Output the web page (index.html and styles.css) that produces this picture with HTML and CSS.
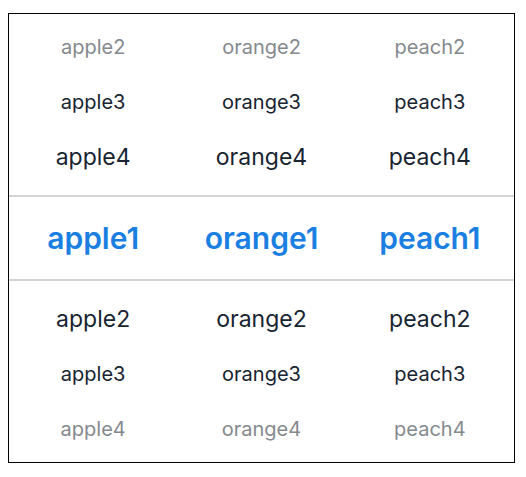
FILE: index.html
```html
<!DOCTYPE html>
<html lang="en">
<head>
	<meta charset="UTF-8">
	<title>Picker</title>
	<link rel="stylesheet" href="styles.css">
</head>
<body>
	<div class="picker">
		<div class="group top">
			<div class="row far"><span>apple2</span><span>orange2</span><span>peach2</span></div>
			<div class="row mid"><span>apple3</span><span>orange3</span><span>peach3</span></div>
			<div class="row near"><span>apple4</span><span>orange4</span><span>peach4</span></div>
		</div>
		<div class="row selected"><span>apple1</span><span>orange1</span><span>peach1</span></div>
		<div class="group bottom">
			<div class="row near"><span>apple2</span><span>orange2</span><span>peach2</span></div>
			<div class="row mid"><span>apple3</span><span>orange3</span><span>peach3</span></div>
			<div class="row far"><span>apple4</span><span>orange4</span><span>peach4</span></div>
		</div>
	</div>
</body>
</html>
```
FILE: styles.css
```css
*{margin:0;padding:0;box-sizing:border-box;}
body{font-family:Inter,Roboto,sans-serif;background:#fff;}
.picker{width:507px;height:450px;margin:13px 0 0 8px;border:1px solid #000;display:flex;flex-direction:column;}
.group{height:181px;}
.group.top{padding-top:5px;}
.group.bottom{padding-top:10px;}
.row{display:grid;grid-template-columns:1fr 1fr 1fr;height:55px;align-items:center;text-align:center;color:#182431;}
.row.far{font-size:20px;color:#85898e;}
.row.mid{font-size:20px;}
.row.near{font-size:23px;}
.row.selected{height:86px;border-top:2px solid #d3d3d3;border-bottom:2px solid #d3d3d3;font-size:30px;font-weight:600;color:#1b7fe2;}
```
